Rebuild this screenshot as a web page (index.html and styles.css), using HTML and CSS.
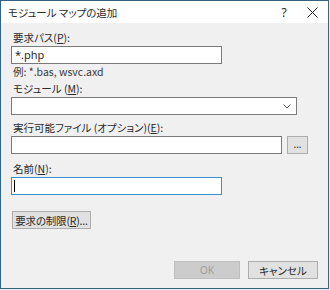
FILE: index.html
```html
<!DOCTYPE html>
<html lang="ja">
<head>
<meta charset="utf-8">
<link rel="stylesheet" href="styles.css">
</head>
<body>
<div class="window">
  <div class="titlebar">
    <span class="title">モジュール マップの追加</span>
    <span class="help">?</span>
    <span class="close"><svg width="11" height="11" viewBox="0 0 11 11"><path d="M0.5 0.5 L10.5 10.5 M10.5 0.5 L0.5 10.5" stroke="#222" stroke-width="1" fill="none"/></svg></span>
  </div>
  <div class="body">
    <div class="label l1">要求パス(<u>P</u>):</div>
    <div class="input w210">*.php</div>
    <div class="hint">例: *.bas, wsvc.axd</div>

    <div class="label l2">モジュール (<u>M</u>):</div>
    <div class="input select"><svg class="chev" width="8" height="5" viewBox="0 0 8 5"><path d="M0.5 0.5 L4 4 L7.5 0.5" stroke="#555" stroke-width="1" fill="none"/></svg></div>

    <div class="label l3">実行可能ファイル (オプション)(<u>E</u>):</div>
    <div class="row">
      <div class="input exe"></div>
      <div class="btn browse">...</div>
    </div>

    <div class="label l4">名前(<u>N</u>):</div>
    <div class="input w210 focus"><span class="caret"></span></div>

    <div class="btn limit">要求の制限(<u>R</u>)...</div>

    <div class="footer">
      <div class="btn ok">OK</div>
      <div class="btn cancel">キャンセル</div>
    </div>
  </div>
</div>
</body>
</html>
```
FILE: styles.css
```css
html, body {
  margin: 0;
  padding: 0;
  width: 330px;
  height: 290px;
  overflow: hidden;
  background: #f0f0f0;
}
body {
  font-family: "Noto Sans CJK JP", "Noto Sans", sans-serif;
  font-size: 10.5px;
  font-feature-settings: "palt";
  color: #2a2a2a;
  white-space: nowrap;
}
.window {
  box-sizing: border-box;
  width: 329px;
  height: 289px;
  border: 1px solid #35637f;
  background: #f0f0f0;
  display: flex;
  flex-direction: column;
}
.titlebar {
  height: 22px;
  background: #ffffff;
  display: flex;
  align-items: center;
  padding-left: 7px;
  flex: none;
}
.title {
  flex: 1;
  line-height: 14px;
  padding-top: 1px;
}
.help {
  width: 16px;
  text-align: center;
  font-family: "Noto Sans", sans-serif;
  font-size: 12px;
  margin-right: 15px;
}
.close {
  width: 11px;
  height: 11px;
  margin-right: 10px;
  display: flex;
}
.body {
  flex: 1;
  padding: 8px 0 0 10px;
  display: flex;
  flex-direction: column;
  align-items: flex-start;
}
u { text-decoration: underline; text-underline-offset: 1px; }
.label {
  line-height: 14px;
  height: 14px;
  margin-bottom: 1px;
  padding-left: 2px;
}
.l1 { margin-top: 0; }
.l2 { margin-top: 3px; }
.l3 { margin-top: 6px; }
.l4 { margin-top: 8px; }
.input {
  box-sizing: border-box;
  height: 18px;
  background: #fff;
  border: 1px solid #7a7a7a;
  line-height: 16px;
  padding-left: 3px;
  font-family: "Noto Sans", "Noto Sans CJK JP", sans-serif;
  font-size: 11px;
  position: relative;
}
.w210 { width: 211px; }
.hint {
  line-height: 14px;
  margin-top: 1px;
  padding-left: 2px;
  color: #3a3a3a;
}
.select {
  width: 286px;
  display: flex;
  align-items: center;
  justify-content: flex-end;
  padding-right: 5px;
}
.row {
  display: flex;
  gap: 5px;
  align-items: flex-start;
}
.exe { width: 271px; }
.btn {
  box-sizing: border-box;
  height: 18px;
  background: #e1e1e1;
  border: 1px solid #adadad;
  display: flex;
  align-items: center;
  justify-content: center;
}
.browse {
  width: 21px;
  font-family: "Noto Sans", sans-serif;
  font-size: 10px;
  line-height: 1;
  padding-bottom: 3px;
}
.focus { border-color: #3a8fce; }
.caret {
  position: absolute;
  left: 2px;
  top: 2px;
  width: 1px;
  height: 12px;
  background: #000;
}
.limit {
  margin-top: 16px;
  width: 79px;
  margin-left: 1px;
  letter-spacing: -0.2px;
}
.footer {
  margin-top: auto;
  margin-bottom: 9px;
  align-self: stretch;
  display: flex;
  justify-content: flex-end;
  gap: 8px;
  padding-right: 10px;
}
.ok {
  width: 66px;
  background: #cccccc;
  border-color: #bfbfbf;
  color: #a0a0a0;
  font-family: "Noto Sans", sans-serif;
}
.cancel {
  width: 70px;
}
```
